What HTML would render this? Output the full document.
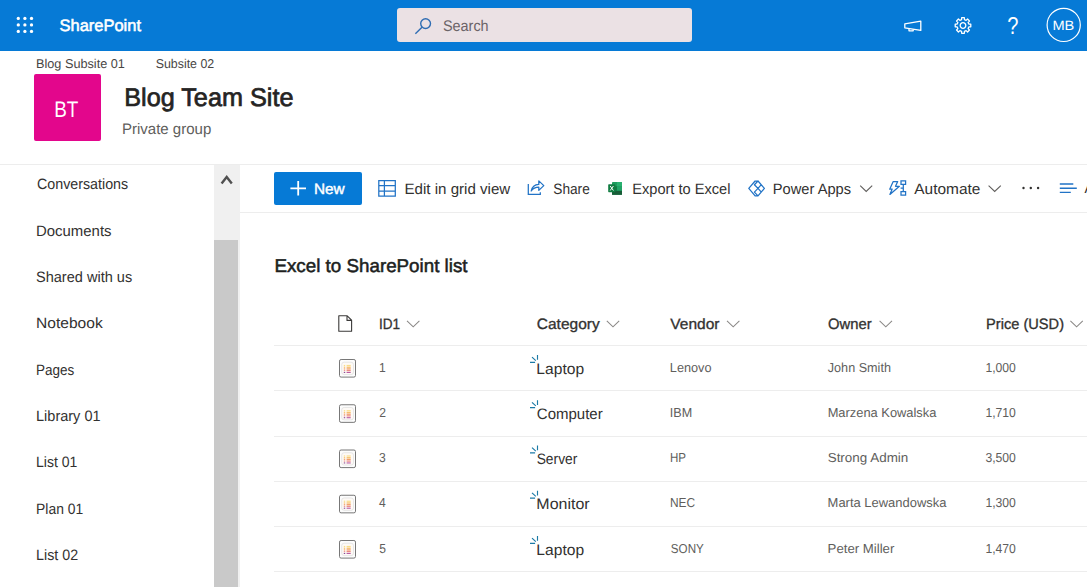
<!DOCTYPE html>
<html>
<head>
<meta charset="utf-8">
<title>Blog Team Site - Excel to SharePoint list</title>
<style>
*{box-sizing:border-box;margin:0;padding:0}
html,body{width:1087px;height:587px;overflow:hidden;background:#fff}
body{font-family:"Liberation Sans",sans-serif;color:#323130;position:relative}
.a{position:absolute}
.t{position:absolute;white-space:nowrap;line-height:1;transform-origin:0 0;text-rendering:geometricPrecision}
svg{position:absolute;overflow:visible}
.hl{position:absolute;height:1px;background:#ededed}
</style>
</head>
<body>
<!-- suite bar -->
<div class="a" style="left:0;top:0;width:1087px;height:50.7px;background:#067ad6"></div>
<svg style="left:0;top:0" width="60" height="50" fill="#fff">
<circle cx="18.3" cy="18.4" r="1.65"/><circle cx="24.9" cy="18.4" r="1.65"/><circle cx="31.5" cy="18.4" r="1.65"/>
<circle cx="18.3" cy="24.9" r="1.65"/><circle cx="24.9" cy="24.9" r="1.65"/><circle cx="31.5" cy="24.9" r="1.65"/>
<circle cx="18.3" cy="31.4" r="1.65"/><circle cx="24.9" cy="31.4" r="1.65"/><circle cx="31.5" cy="31.4" r="1.65"/>
</svg>
<div class="a" style="left:397px;top:8px;width:295px;height:34px;background:#ebe1e4;border-radius:3px"></div>
<svg style="left:0;top:0" width="1087" height="50" fill="none" stroke="#fff" stroke-width="1.3">
<!-- search icon -->
<g stroke="#2f6db3" stroke-width="1.4"><circle cx="425.6" cy="23.6" r="4.9"/><path d="M422 27.2L415.4 33.8"/></g>
<!-- megaphone -->
<path d="M904.8 23.8L920.8 21.2V30.4L904.8 27.8Z" stroke-linejoin="round"/><path d="M909 28.6V30.8H913.2V29.4" stroke-linejoin="round"/>
<!-- gear -->
<g transform="translate(963,25.5)"><circle r="2.8"/><path d="M5.83 -1.43L7.79 -1.34L7.79 1.34L5.83 1.43L5.13 3.11L6.45 4.56L4.56 6.45L3.11 5.13L1.43 5.83L1.34 7.79L-1.34 7.79L-1.43 5.83L-3.11 5.13L-4.56 6.45L-6.45 4.56L-5.13 3.11L-5.83 1.43L-7.79 1.34L-7.79 -1.34L-5.83 -1.43L-5.13 -3.11L-6.45 -4.56L-4.56 -6.45L-3.11 -5.13L-1.43 -5.83L-1.34 -7.79L1.34 -7.79L1.43 -5.83L3.11 -5.13L4.56 -6.45L6.45 -4.56L5.13 -3.11Z" stroke-linejoin="round"/></g>
<!-- avatar -->
<circle cx="1063.7" cy="24.9" r="16.6" stroke-width="1.2"/>
</svg>

<!-- site header -->
<div class="a" style="left:34px;top:74px;width:67px;height:67px;background:#e3068c;border-radius:2px"></div>
<div class="hl" style="left:0;top:164px;width:1087px"></div>

<!-- scrollbar -->
<div class="a" style="left:214px;top:165px;width:26px;height:422px;background:#f0f0f0"></div>
<div class="a" style="left:214px;top:240px;width:24px;height:347px;background:#c9c9c9"></div>
<svg style="left:214px;top:165px" width="26" height="30" fill="none" stroke="#505050" stroke-width="2.4"><path d="M7.6 18.4L12.7 11.9L17.8 18.4"/></svg>

<!-- command bar -->
<div class="a" style="left:274px;top:172px;width:88px;height:33px;background:#067ad6;border-radius:2px"></div>
<div class="hl" style="left:240px;top:212px;width:847px"></div>
<svg style="left:0;top:165px" width="1087" height="47" viewBox="0 165 1087 47" fill="none" stroke="#2173c6" stroke-width="1.25">
<path d="M298.2 181V195.6M290.4 188.3H306" stroke="#fff" stroke-width="1.8"/>
<!-- grid -->
<path d="M378.8 180.6H395.3V196.2H378.8ZM384.4 180.6V196.2M378.8 185.6H395.3M378.8 191.1H395.3"/>
<!-- share -->
<path d="M528.3 184V194.3H540.3V192.2" /><path d="M531.2 191C532 187 535 184.6 538.8 184.4V180.9L543.8 185.6L538.8 190.4V187.2C535.6 187.2 533 188.4 531.2 191Z" stroke-linejoin="round"/>
<!-- excel -->
<g stroke="none"><rect x="612" y="182" width="10" height="12.8" rx="0.8" fill="#1d9c5e"/><rect x="617" y="182" width="5" height="4.3" fill="#29b06f"/><rect x="612" y="190.6" width="10" height="4.2" fill="#185c37"/><rect x="617" y="186.3" width="5" height="4.3" fill="#21a366"/><rect x="612" y="186.3" width="5" height="4.3" fill="#107c41"/><rect x="608.2" y="184.2" width="7.2" height="8" rx="0.7" fill="#107c41"/><path d="M610.2 186L613.4 190.5M613.4 186L610.2 190.5" stroke="#fff" stroke-width="1"/></g>
<!-- power apps -->
<path d="M758 181L754.4 184.7L758 188.4L754.4 192.1L758 195.9L764.4 188.4ZM758 188.4L761.3 184.6M758 188.4L761.3 192.2M758 181H755.1L748.8 188.4L755.1 195.9H758" stroke-linejoin="round" stroke-width="1.25"/>
<!-- chevrons -->
<g stroke="#605e5c" stroke-width="1.1"><path d="M860.2 185.6L866.2 191.4L872.2 185.6"/><path d="M988.6 185.6L994.7 191.4L1000.8 185.6"/></g>
<!-- automate -->
<path d="M893.2 181.6H897.7L895.5 186.3H899.4L889.9 194.4L892.1 189.2H889.7Z" stroke-linejoin="round"/><path d="M901 180.8H905.6V184.4H901ZM901 191.6H905.6V195.2H901ZM903.3 184.4V191.6M900.6 188H903.3"/>
<!-- more -->
<g fill="#323130" stroke="none"><circle cx="1023.5" cy="188" r="1.2"/><circle cx="1030.8" cy="188" r="1.2"/><circle cx="1038.1" cy="188" r="1.2"/></g>
<!-- view lines -->
<path d="M1059.8 184H1073.3M1059.8 188.2H1076.8M1059.8 192.4H1070.8" stroke-width="1.4"/>
</svg>

<!-- table -->
<div class="hl" style="left:274px;top:345px;width:813px"></div>
<div class="hl" style="left:274px;top:390px;width:813px"></div>
<div class="hl" style="left:274px;top:436px;width:813px"></div>
<div class="hl" style="left:274px;top:481px;width:813px"></div>
<div class="hl" style="left:274px;top:526px;width:813px"></div>
<div class="hl" style="left:274px;top:571px;width:813px"></div>
<svg style="left:0;top:300px" width="1087" height="287" viewBox="0 300 1087 287" fill="none">
<path d="M338.8 315.8H347.2L351.6 320.2V331.2H338.8ZM347 316V320.4H351.4" stroke="#3b3a39" stroke-width="1.1" stroke-linejoin="round"/>
<g transform="translate(407,320.8)" stroke="#8a8886" stroke-width="1.05" fill="none"><path d="M0 0L6.2 6L12.4 0"/></g><g transform="translate(606.8,320.8)" stroke="#8a8886" stroke-width="1.05" fill="none"><path d="M0 0L6.2 6L12.4 0"/></g><g transform="translate(727,320.8)" stroke="#8a8886" stroke-width="1.05" fill="none"><path d="M0 0L6.2 6L12.4 0"/></g><g transform="translate(879.6,320.8)" stroke="#8a8886" stroke-width="1.05" fill="none"><path d="M0 0L6.2 6L12.4 0"/></g><g transform="translate(1070.4,320.8)" stroke="#8a8886" stroke-width="1.05" fill="none"><path d="M0 0L6.2 6L12.4 0"/></g>
<g transform="translate(0,345)"><rect x="339.5" y="14.5" width="16" height="17.6" rx="1.6" fill="#fdfdfd" stroke="#777" stroke-width="1"/><rect x="341.7" y="17.2" width="11.8" height="12.4" rx="2.4" fill="#fefaf6" stroke="#dcdcdc" stroke-width="0.7"/>
<g opacity="0.9"><rect x="343.8" y="19.9" width="1.4" height="1.2" fill="#f8dc7c"/><rect x="346.6" y="19.9" width="4.1" height="1.2" fill="#f8dc7c"/>
<rect x="343.8" y="21.6" width="1.4" height="1.3" fill="#f7c066"/><rect x="346.6" y="21.6" width="4.1" height="1.3" fill="#f7b85e"/>
<rect x="343.8" y="23.3" width="1.4" height="1.3" fill="#f2a068"/><rect x="346.6" y="23.3" width="4.1" height="1.3" fill="#f0945c"/>
<rect x="343.8" y="25" width="1.4" height="1.2" fill="#eb8f8a"/><rect x="346.6" y="25" width="4.1" height="1.2" fill="#ea8078"/>
<rect x="343.8" y="26.9" width="1.4" height="1.1" fill="#7a3a8c"/><rect x="346.6" y="26.9" width="4.1" height="1.1" fill="#b24a9c"/></g></g><g transform="translate(0,390.25)"><rect x="339.5" y="14.5" width="16" height="17.6" rx="1.6" fill="#fdfdfd" stroke="#777" stroke-width="1"/><rect x="341.7" y="17.2" width="11.8" height="12.4" rx="2.4" fill="#fefaf6" stroke="#dcdcdc" stroke-width="0.7"/>
<g opacity="0.9"><rect x="343.8" y="19.9" width="1.4" height="1.2" fill="#f8dc7c"/><rect x="346.6" y="19.9" width="4.1" height="1.2" fill="#f8dc7c"/>
<rect x="343.8" y="21.6" width="1.4" height="1.3" fill="#f7c066"/><rect x="346.6" y="21.6" width="4.1" height="1.3" fill="#f7b85e"/>
<rect x="343.8" y="23.3" width="1.4" height="1.3" fill="#f2a068"/><rect x="346.6" y="23.3" width="4.1" height="1.3" fill="#f0945c"/>
<rect x="343.8" y="25" width="1.4" height="1.2" fill="#eb8f8a"/><rect x="346.6" y="25" width="4.1" height="1.2" fill="#ea8078"/>
<rect x="343.8" y="26.9" width="1.4" height="1.1" fill="#7a3a8c"/><rect x="346.6" y="26.9" width="4.1" height="1.1" fill="#b24a9c"/></g></g><g transform="translate(0,435.5)"><rect x="339.5" y="14.5" width="16" height="17.6" rx="1.6" fill="#fdfdfd" stroke="#777" stroke-width="1"/><rect x="341.7" y="17.2" width="11.8" height="12.4" rx="2.4" fill="#fefaf6" stroke="#dcdcdc" stroke-width="0.7"/>
<g opacity="0.9"><rect x="343.8" y="19.9" width="1.4" height="1.2" fill="#f8dc7c"/><rect x="346.6" y="19.9" width="4.1" height="1.2" fill="#f8dc7c"/>
<rect x="343.8" y="21.6" width="1.4" height="1.3" fill="#f7c066"/><rect x="346.6" y="21.6" width="4.1" height="1.3" fill="#f7b85e"/>
<rect x="343.8" y="23.3" width="1.4" height="1.3" fill="#f2a068"/><rect x="346.6" y="23.3" width="4.1" height="1.3" fill="#f0945c"/>
<rect x="343.8" y="25" width="1.4" height="1.2" fill="#eb8f8a"/><rect x="346.6" y="25" width="4.1" height="1.2" fill="#ea8078"/>
<rect x="343.8" y="26.9" width="1.4" height="1.1" fill="#7a3a8c"/><rect x="346.6" y="26.9" width="4.1" height="1.1" fill="#b24a9c"/></g></g><g transform="translate(0,480.75)"><rect x="339.5" y="14.5" width="16" height="17.6" rx="1.6" fill="#fdfdfd" stroke="#777" stroke-width="1"/><rect x="341.7" y="17.2" width="11.8" height="12.4" rx="2.4" fill="#fefaf6" stroke="#dcdcdc" stroke-width="0.7"/>
<g opacity="0.9"><rect x="343.8" y="19.9" width="1.4" height="1.2" fill="#f8dc7c"/><rect x="346.6" y="19.9" width="4.1" height="1.2" fill="#f8dc7c"/>
<rect x="343.8" y="21.6" width="1.4" height="1.3" fill="#f7c066"/><rect x="346.6" y="21.6" width="4.1" height="1.3" fill="#f7b85e"/>
<rect x="343.8" y="23.3" width="1.4" height="1.3" fill="#f2a068"/><rect x="346.6" y="23.3" width="4.1" height="1.3" fill="#f0945c"/>
<rect x="343.8" y="25" width="1.4" height="1.2" fill="#eb8f8a"/><rect x="346.6" y="25" width="4.1" height="1.2" fill="#ea8078"/>
<rect x="343.8" y="26.9" width="1.4" height="1.1" fill="#7a3a8c"/><rect x="346.6" y="26.9" width="4.1" height="1.1" fill="#b24a9c"/></g></g><g transform="translate(0,526)"><rect x="339.5" y="14.5" width="16" height="17.6" rx="1.6" fill="#fdfdfd" stroke="#777" stroke-width="1"/><rect x="341.7" y="17.2" width="11.8" height="12.4" rx="2.4" fill="#fefaf6" stroke="#dcdcdc" stroke-width="0.7"/>
<g opacity="0.9"><rect x="343.8" y="19.9" width="1.4" height="1.2" fill="#f8dc7c"/><rect x="346.6" y="19.9" width="4.1" height="1.2" fill="#f8dc7c"/>
<rect x="343.8" y="21.6" width="1.4" height="1.3" fill="#f7c066"/><rect x="346.6" y="21.6" width="4.1" height="1.3" fill="#f7b85e"/>
<rect x="343.8" y="23.3" width="1.4" height="1.3" fill="#f2a068"/><rect x="346.6" y="23.3" width="4.1" height="1.3" fill="#f0945c"/>
<rect x="343.8" y="25" width="1.4" height="1.2" fill="#eb8f8a"/><rect x="346.6" y="25" width="4.1" height="1.2" fill="#ea8078"/>
<rect x="343.8" y="26.9" width="1.4" height="1.1" fill="#7a3a8c"/><rect x="346.6" y="26.9" width="4.1" height="1.1" fill="#b24a9c"/></g></g>
<g transform="translate(0,345.3)" stroke="#1b7aa6" stroke-width="1.15" fill="none"><path d="M530 17.1H535.1M532 11.9L535.8 15.4M537.5 9.8V14.4"/></g><g transform="translate(0,390.55)" stroke="#1b7aa6" stroke-width="1.15" fill="none"><path d="M530 17.1H535.1M532 11.9L535.8 15.4M537.5 9.8V14.4"/></g><g transform="translate(0,435.8)" stroke="#1b7aa6" stroke-width="1.15" fill="none"><path d="M530 17.1H535.1M532 11.9L535.8 15.4M537.5 9.8V14.4"/></g><g transform="translate(0,481.05)" stroke="#1b7aa6" stroke-width="1.15" fill="none"><path d="M530 17.1H535.1M532 11.9L535.8 15.4M537.5 9.8V14.4"/></g><g transform="translate(0,526.3)" stroke="#1b7aa6" stroke-width="1.15" fill="none"><path d="M530 17.1H535.1M532 11.9L535.8 15.4M537.5 9.8V14.4"/></g>
</svg>

<div class="t" style="left:0;top:18px;font-size:16.5px;color:#fff;transform:translateX(59.60px) scaleX(0.9969);-webkit-text-stroke:0.55px #fff">SharePoint</div>
<div class="t" style="left:0;top:19px;font-size:15.5px;color:#6b6468;transform:translateX(442.98px) scaleX(0.9292)">Search</div>
<div class="t" style="left:0;top:15px;font-size:24.5px;color:#fff;transform:translateX(1007.13px) scaleX(0.8200)">?</div>
<div class="t" style="left:0;top:19px;font-size:13.5px;color:#fff;transform:translateX(1052.42px) scaleX(1.0808)">MB</div>
<div class="t" style="left:0;top:58px;font-size:12.8px;color:#484644;transform:translateX(36.01px) scaleX(0.9918)">Blog Subsite 01</div>
<div class="t" style="left:0;top:58px;font-size:12.8px;color:#484644;transform:translateX(155.70px) scaleX(0.9676)">Subsite 02</div>
<div class="t" style="left:0;top:99px;font-size:22.5px;color:#fff;transform:translateX(54.22px) scaleX(0.8408)">BT</div>
<div class="t" style="left:0;top:86px;font-size:25.5px;color:#252423;transform:translateX(124.22px) scaleX(0.9892);-webkit-text-stroke:0.71px #252423">Blog Team Site</div>
<div class="t" style="left:0;top:122px;font-size:15.2px;color:#605e5c;transform:translateX(121.91px) scaleX(0.9889)">Private group</div>
<div class="t" style="left:0;top:177px;font-size:15px;color:#323130;transform:translateX(37.00px) scaleX(0.9509)">Conversations</div>
<div class="t" style="left:0;top:224px;font-size:15px;color:#323130;transform:translateX(36.00px) scaleX(0.9951)">Documents</div>
<div class="t" style="left:0;top:270px;font-size:15px;color:#323130;transform:translateX(35.99px) scaleX(0.9691)">Shared with us</div>
<div class="t" style="left:0;top:316px;font-size:15px;color:#323130;transform:translateX(35.96px) scaleX(1.0391)">Notebook</div>
<div class="t" style="left:0;top:363px;font-size:15px;color:#323130;transform:translateX(36.10px) scaleX(0.8993)">Pages</div>
<div class="t" style="left:0;top:409px;font-size:15px;color:#323130;transform:translateX(36.03px) scaleX(0.9670)">Library 01</div>
<div class="t" style="left:0;top:455px;font-size:15px;color:#323130;transform:translateX(36.06px) scaleX(0.9358)">List 01</div>
<div class="t" style="left:0;top:502px;font-size:15px;color:#323130;transform:translateX(36.08px) scaleX(0.9247)">Plan 01</div>
<div class="t" style="left:0;top:548px;font-size:15px;color:#323130;transform:translateX(36.05px) scaleX(0.9521)">List 02</div>
<div class="t" style="left:0;top:182px;font-size:15px;color:#fff;transform:translateX(313.88px) scaleX(1.0249);-webkit-text-stroke:0.42px #fff">New</div>
<div class="t" style="left:0;top:182px;font-size:15px;color:#323130;transform:translateX(404.49px) scaleX(1.0066)">Edit in grid view</div>
<div class="t" style="left:0;top:182px;font-size:15px;color:#323130;transform:translateX(553.29px) scaleX(0.9111)">Share</div>
<div class="t" style="left:0;top:182px;font-size:15px;color:#323130;transform:translateX(632.23px) scaleX(0.9734)">Export to Excel</div>
<div class="t" style="left:0;top:182px;font-size:15px;color:#323130;transform:translateX(772.82px) scaleX(0.9778)">Power Apps</div>
<div class="t" style="left:0;top:182px;font-size:15px;color:#323130;transform:translateX(914.28px) scaleX(1.0292)">Automate</div>
<div class="t" style="left:0;top:181px;font-size:15px;color:#323130;transform:translateX(1084.40px) scaleX(0.9600)">A</div>
<div class="t" style="left:0;top:257px;font-size:18.5px;color:#201f1e;transform:translateX(274.45px) scaleX(1.0152);-webkit-text-stroke:0.52px #201f1e">Excel to SharePoint list</div>
<div class="t" style="left:0;top:317px;font-size:15px;color:#323130;transform:translateX(379.00px) scaleX(0.9045);-webkit-text-stroke:0.32px #323130">ID1</div>
<div class="t" style="left:0;top:317px;font-size:15px;color:#323130;transform:translateX(536.79px) scaleX(1.0329);-webkit-text-stroke:0.32px #323130">Category</div>
<div class="t" style="left:0;top:317px;font-size:15px;color:#323130;transform:translateX(670.30px) scaleX(1.0348);-webkit-text-stroke:0.32px #323130">Vendor</div>
<div class="t" style="left:0;top:317px;font-size:15px;color:#323130;transform:translateX(828.00px) scaleX(0.9864);-webkit-text-stroke:0.32px #323130">Owner</div>
<div class="t" style="left:0;top:317px;font-size:15px;color:#323130;transform:translateX(986.12px) scaleX(0.9734);-webkit-text-stroke:0.32px #323130">Price (USD)</div>
<div class="t" style="left:0;top:361px;font-size:13px;color:#605e5c;transform:translateX(378.97px) scaleX(0.9300)">1</div>
<div class="t" style="left:0;top:362px;font-size:15.2px;color:#323130;transform:translateX(536.37px) scaleX(1.0265)">Laptop</div>
<div class="t" style="left:0;top:361px;font-size:13px;color:#605e5c;transform:translateX(669.82px) scaleX(0.9778)">Lenovo</div>
<div class="t" style="left:0;top:361px;font-size:13px;color:#605e5c;transform:translateX(827.79px) scaleX(0.9705)">John Smith</div>
<div class="t" style="left:0;top:361px;font-size:13px;color:#605e5c;transform:translateX(985.38px) scaleX(0.9376)">1,000</div>
<div class="t" style="left:0;top:406px;font-size:13px;color:#605e5c;transform:translateX(379.36px) scaleX(0.9300)">2</div>
<div class="t" style="left:0;top:407px;font-size:15.2px;color:#323130;transform:translateX(536.80px) scaleX(0.9871)">Computer</div>
<div class="t" style="left:0;top:406px;font-size:13px;color:#605e5c;transform:translateX(669.83px) scaleX(0.9679)">IBM</div>
<div class="t" style="left:0;top:406px;font-size:13px;color:#605e5c;transform:translateX(827.63px) scaleX(0.9903)">Marzena Kowalska</div>
<div class="t" style="left:0;top:406px;font-size:13px;color:#605e5c;transform:translateX(985.38px) scaleX(0.9376)">1,710</div>
<div class="t" style="left:0;top:451px;font-size:13px;color:#605e5c;transform:translateX(379.12px) scaleX(0.9300)">3</div>
<div class="t" style="left:0;top:452px;font-size:15.2px;color:#323130;transform:translateX(536.66px) scaleX(0.9090)">Server</div>
<div class="t" style="left:0;top:451px;font-size:13px;color:#605e5c;transform:translateX(669.91px) scaleX(0.8909)">HP</div>
<div class="t" style="left:0;top:451px;font-size:13px;color:#605e5c;transform:translateX(827.68px) scaleX(1.0327)">Strong Admin</div>
<div class="t" style="left:0;top:451px;font-size:13px;color:#605e5c;transform:translateX(985.38px) scaleX(0.9376)">3,500</div>
<div class="t" style="left:0;top:496px;font-size:13px;color:#605e5c;transform:translateX(379.05px) scaleX(0.9300)">4</div>
<div class="t" style="left:0;top:497px;font-size:15.2px;color:#323130;transform:translateX(536.35px) scaleX(1.0527)">Monitor</div>
<div class="t" style="left:0;top:496px;font-size:13px;color:#605e5c;transform:translateX(669.88px) scaleX(0.9171)">NEC</div>
<div class="t" style="left:0;top:496px;font-size:13px;color:#605e5c;transform:translateX(827.62px) scaleX(0.9965)">Marta Lewandowska</div>
<div class="t" style="left:0;top:496px;font-size:13px;color:#605e5c;transform:translateX(985.38px) scaleX(0.9376)">1,300</div>
<div class="t" style="left:0;top:542px;font-size:13px;color:#605e5c;transform:translateX(379.13px) scaleX(0.9300)">5</div>
<div class="t" style="left:0;top:543px;font-size:15.2px;color:#323130;transform:translateX(536.37px) scaleX(1.0265)">Laptop</div>
<div class="t" style="left:0;top:542px;font-size:13px;color:#605e5c;transform:translateX(670.80px) scaleX(0.8959)">SONY</div>
<div class="t" style="left:0;top:542px;font-size:13px;color:#605e5c;transform:translateX(827.60px) scaleX(1.0153)">Peter Miller</div>
<div class="t" style="left:0;top:542px;font-size:13px;color:#605e5c;transform:translateX(985.38px) scaleX(0.9376)">1,470</div>
</body>
</html>
